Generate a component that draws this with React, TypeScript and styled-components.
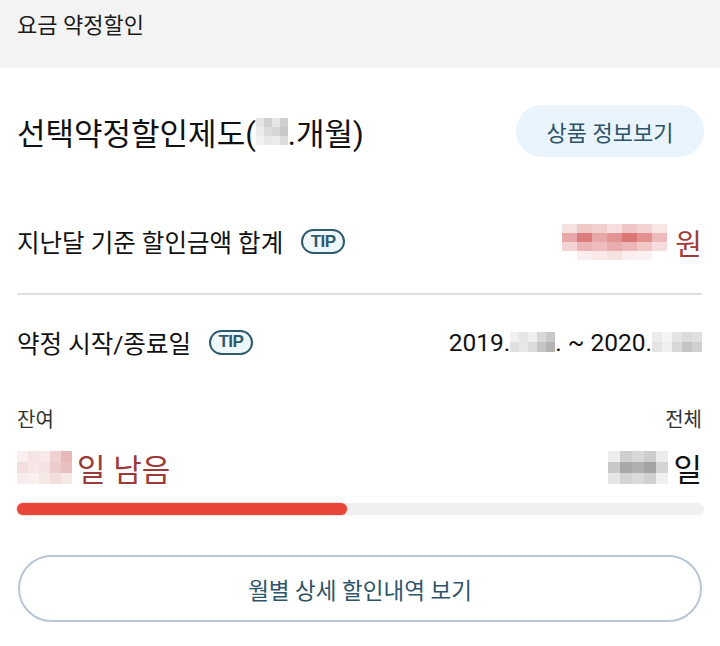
import React from "react";
import styled, { createGlobalStyle } from "styled-components";

const Global = createGlobalStyle`
  html, body { margin: 0; padding: 0; background: #ffffff; }
  body { font-family: "Roboto", "Noto Sans CJK KR", sans-serif; color: #111; }
  * { box-sizing: border-box; }
`;

const Page = styled.div`
  width: 720px;
  height: 646px;
  overflow: hidden;
  background: #fff;
  display: flex;
  flex-direction: column;
`;

const Header = styled.header`
  height: 68px;
  flex: none;
  background: #f3f3f3;
  padding: 11px 17px 0;
  font-size: 22px;
  line-height: 30px;
  color: #1a1a1a;
`;

const Body = styled.main`
  padding: 0 18px 0 17px;
  display: flex;
  flex-direction: column;
`;

const TitleRow = styled.div`
  height: 126px;
  display: flex;
  align-items: center;
  justify-content: space-between;
`;

const Title = styled.h1`
  margin: 0;
  font-weight: 400;
  font-size: 31px;
  color: #111;
  display: flex;
  align-items: center;
`;

const PillButton = styled.button`
  width: 188px;
  height: 52px;
  border: none;
  border-radius: 26px;
  background: #eaf4fc;
  color: #2d5468;
  font-family: inherit;
  font-size: 22px;
  margin-right: -2px;
`;

const InfoRow = styled.div<{ $h: number; $pb?: number }>`
  height: ${(p) => p.$h}px;
  padding-bottom: ${(p) => p.$pb || 0}px;
  display: flex;
  align-items: center;
  justify-content: space-between;
`;

const Label = styled.div`
  display: flex;
  align-items: center;
  gap: 18px;
  font-size: 24.5px;
  color: #111;
`;

const Tip = styled.span`
  display: inline-flex;
  align-items: center;
  justify-content: center;
  width: 44px;
  height: 25px;
  border: 2px solid #2f5a6c;
  border-radius: 13px;
  background: #eef8fc;
  color: #2f5a6c;
  font-family: "Liberation Sans", sans-serif;
  font-weight: 700;
  font-size: 17px;
  letter-spacing: -0.5px;
`;

const Value = styled.div<{ $color?: string; $size: number }>`
  display: flex;
  align-items: center;
  font-size: ${(p) => p.$size}px;
  color: ${(p) => p.$color || "#111"};
`;

const Divider = styled.hr`
  margin: 0;
  border: none;
  height: 2px;
  background: #e0e0e0;
`;

const Mosaic = styled.span<{ $cols: number; $w: number; $h: number }>`
  display: inline-grid;
  grid-template-columns: repeat(${(p) => p.$cols}, ${(p) => p.$w}px);
  grid-auto-rows: ${(p) => p.$h}px;
`;

const Cell = styled.span<{ $c: string }>`
  background: ${(p) => p.$c};
`;

const Gap = styled.span<{ $w: number }>`
  display: inline-block;
  width: ${(p) => p.$w}px;
`;

const Period = styled.div`
  padding-top: 17px;
  display: flex;
  flex-direction: column;
`;

const PeriodLabels = styled.div`
  display: flex;
  justify-content: space-between;
  font-size: 20px;
  color: #333;
  line-height: 28px;
`;

const PeriodValues = styled.div`
  margin-top: 13px;
  display: flex;
  justify-content: space-between;
  align-items: center;
  height: 40px;
`;

const BigValue = styled.div<{ $color: string }>`
  display: flex;
  align-items: center;
  font-size: 31px;
  color: ${(p) => p.$color};
`;

const Track = styled.div`
  margin-top: 16px;
  height: 12px;
  border-radius: 6px;
  background: #f0f0f0;
  margin-right: -2px;
`;

const Fill = styled.div`
  height: 100%;
  border-radius: 6px;
  background: #e8463b;
  box-shadow: 0 0 2px rgba(232, 70, 59, 0.6);
`;

const OutlineButton = styled.button`
  margin: 40px 0 0 1px;
  height: 67px;
  border: 2px solid #b9c6d6;
  border-radius: 34px;
  background: #fff;
  color: #2d5468;
  font-family: inherit;
  font-size: 22.5px;
`;

const mos = (rows: string[][], w: number, h: number = w) => (
  <Mosaic $cols={rows[0].length} $w={w} $h={h}>
    {rows.flat().map((c, i) => (
      <Cell key={i} $c={c} />
    ))}
  </Mosaic>
);

const W = "#ffffff";

export default function App() {
  return (
    <Page>
      <Global />
      <Header>요금 약정할인</Header>
      <Body>
        <TitleRow>
          <Title>
            선택약정할인제도(
            {mos(
              [
                ["#e4e4e4", "#d0d0d0", "#e6e6e6", "#cfcfcf"],
                ["#ececec", "#dcdcdc", "#d6d6d6", "#c8c8c8"],
                ["#f2f2f2", "#e8e8e8", "#ececec", "#dcdcdc"],
              ],
              8,
              9
            )}
            .개월)
          </Title>
          <PillButton>상품 정보보기</PillButton>
        </TitleRow>
        <InfoRow $h={99} $pb={4}>
          <Label>
            지난달 기준 할인금액 합계 <Tip>TIP</Tip>
          </Label>
          <Value $color="#a23a3a" $size={29}>
            {mos(
              [
                ["#f6e1e1", "#f0c8c8", "#f2cfcf", "#f6dede", "#f0c5c5", "#f3d2d2", "#f8e6e6"],
                ["#e8a8a8", "#dc7c7c", "#e8a8a8", "#e49494", "#da7676", "#e39090", "#eebaba"],
                ["#f3d4d4", "#ecb4b4", "#eebcbc", "#e8aeae", "#ecb6b6", "#f1c8c8", "#f6dcdc"],
                [W, "#faeeee", "#f8e8e8", "#f6e2e2", "#faeeee", "#fbf1f1", W],
              ],
              15,
              9
            )}
            <Gap $w={8} />원
          </Value>
        </InfoRow>
        <Divider />
        <InfoRow $h={94}>
          <Label>
            약정 시작/종료일 <Tip>TIP</Tip>
          </Label>
          <Value $size={24.5}>
            2019.
            {mos(
              [
                ["#f0f0f0", "#e6e6e6", "#f0f0f0", "#d8d8d8", "#c8c8c8"],
                ["#e0e0e0", "#e8e8e8", "#dcdcdc", "#c4c4c4", "#b4b4b4"],
              ],
              9,
              10
            )}
            . ~ 2020.
            {mos(
              [
                ["#ececec", "#f4f4f4", "#e4e4e4", "#dcdcdc", "#e0e0e0"],
                ["#e4e4e4", "#f0f0f0", "#d8d8d8", "#c4c4c4", "#d0d0d0"],
              ],
              10
            )}
          </Value>
        </InfoRow>
        <Period>
          <PeriodLabels>
            <span>잔여</span>
            <span>전체</span>
          </PeriodLabels>
          <PeriodValues>
            <BigValue $color="#9b3a3a">
              {mos(
                [
                  ["#faf0f0", "#f6e4e4", "#f8eaea", "#f0d2d2", "#e8b8b8"],
                  ["#f3dede", "#f7e7e7", "#f5e2e2", "#eccccc", "#e9c0c0"],
                  ["#f8ecec", "#faf0f0", "#f7e8e8", "#f3dddd", "#f7e8e8"],
                ],
                11
              )}
              <Gap $w={5} />일 남음
            </BigValue>
            <BigValue $color="#111">
              {mos(
                [
                  ["#eeeeee", "#cfcfcf", "#d8d8d8", "#cdcdcd", "#ececec"],
                  ["#c8c8c8", "#a8a8a8", "#b0b0b0", "#a4a4a4", "#d4d4d4"],
                  ["#e6e6e6", "#d4d4d4", "#dadada", "#d0d0d0", "#f0f0f0"],
                ],
                12,
                11
              )}
              <Gap $w={5} />일
            </BigValue>
          </PeriodValues>
          <Track>
            <Fill style={{ width: "48%" }} />
          </Track>
        </Period>
        <OutlineButton>월별 상세 할인내역 보기</OutlineButton>
      </Body>
    </Page>
  );
}
